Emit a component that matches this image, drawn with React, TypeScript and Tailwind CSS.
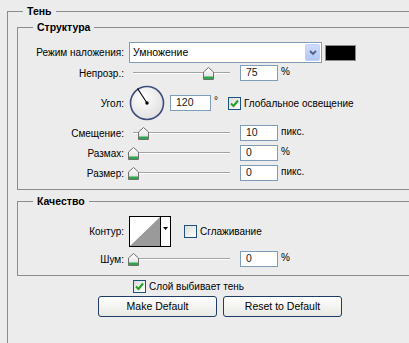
import { FC, ReactNode } from "react";

const font = "font-['Liberation_Sans','DejaVu_Sans',sans-serif]";

const Thumb: FC<{ pos: string }> = ({ pos }) => (
    <svg
        width="11"
        height="13"
        viewBox="0 0 11 13"
        className={`absolute top-[2px] ${pos}`}
    >
        <defs>
            <linearGradient id="thumbFill" x1="0" y1="0" x2="0" y2="1">
                <stop offset="0" stopColor="#ffffff" />
                <stop offset="1" stopColor="#dcdcdc" />
            </linearGradient>
        </defs>
        <path
            d="M5.5 0.5 L10.5 5 L10.5 12.5 L0.5 12.5 L0.5 5 Z"
            fill="url(#thumbFill)"
            stroke="#707070"
        />
        <rect x="1" y="9.5" width="9" height="2.5" fill="#2fa64a" />
    </svg>
);

const Slider: FC<{ pos: string }> = ({ pos }) => (
    <div className="relative ml-[4px] h-[16px] w-[107px] shrink-0">
        <div className="mx-[5px] mt-[7px] h-[2px] border-t border-[#a3a3a3] bg-white" />
        <Thumb pos={pos} />
    </div>
);

const Field: FC<{ value: string; w?: string; ml?: string }> = ({
    value,
    w = "w-[38px]",
    ml = "ml-[5px]",
}) => (
    <div
        className={`${w} ${ml} flex h-[16px] shrink-0 items-center border border-[#7f9db9] bg-white pl-[5px] text-[10.5px] text-[#1a1a1a]`}
    >
        {value}
    </div>
);

const Label: FC<{ children: ReactNode }> = ({ children }) => (
    <div className="w-[106px] shrink-0 text-right text-[10px] leading-[13px]">
        {children}
    </div>
);

const Checkbox: FC<{ checked?: boolean; ml?: string }> = ({
    checked,
    ml = "",
}) => (
    <div
        className={`${ml} flex h-[13px] w-[13px] shrink-0 items-center justify-center border border-[#1c5180] bg-gradient-to-br from-[#dcdcd7] to-white`}
    >
        {checked && (
            <svg width="9" height="9" viewBox="0 0 9 9">
                <path
                    d="M1 4.5 L3.5 7 L8 1.5"
                    fill="none"
                    stroke="#21a121"
                    strokeWidth="2"
                />
            </svg>
        )}
    </div>
);

const SliderRow: FC<{
    label: string;
    pos: string;
    value: string;
    unit: string;
    mt: string;
}> = ({ label, pos, value, unit, mt }) => (
    <div className={`flex h-[16px] items-center ${mt}`}>
        <Label>{label}</Label>
        <Slider pos={pos} />
        <Field value={value} />
        <span className="ml-[3px] self-start text-[10px] leading-[13px]">
            {unit}
        </span>
    </div>
);

const Dial = () => (
    <svg width="36" height="36" viewBox="0 0 36 36" className="ml-[5px] shrink-0">
        <defs>
            <radialGradient id="dialFill" cx="0.4" cy="0.35" r="0.7">
                <stop offset="0" stopColor="#ffffff" />
                <stop offset="1" stopColor="#dedede" />
            </radialGradient>
        </defs>
        <circle cx="18" cy="18" r="16.5" fill="url(#dialFill)" stroke="#3e4c7c" strokeWidth="1.6" />
        <line x1="18" y1="18" x2="8.5" y2="3.5" stroke="#000" strokeWidth="1.1" />
        <circle cx="18" cy="18" r="1.7" fill="#000" />
    </svg>
);

const Contour = () => (
    <div className="ml-[5px] flex h-[31px] w-[42px] shrink-0 border border-black bg-white">
        <svg width="30" height="29" viewBox="0 0 30 29">
            <polygon points="0,29 30,0 30,29" fill="#9a9a9a" />
        </svg>
        <div className="flex w-[10px] items-center justify-center border-l border-black">
            <svg width="5" height="3" viewBox="0 0 5 3" className="-mt-[6px]">
                <polygon points="0,0 5,0 2.5,3" fill="#000" />
            </svg>
        </div>
    </div>
);

const Button: FC<{ children: ReactNode }> = ({ children }) => (
    <div className="flex h-[21px] w-[119px] items-center justify-center rounded-[3px] border border-[#1d3c68] bg-gradient-to-b from-white to-[#e8e8e4] text-[10.5px] text-black">
        {children}
    </div>
);

const App = () => {
    return (
        <div
            className={`${font} h-[343px] w-[409px] overflow-hidden bg-[#ececec] pt-[5px] text-black`}
        >
            <fieldset className="ml-[7px] h-[345px] border-l border-t border-[#8c8c8c]">
                <legend className="ml-[15px] px-[4px] text-[10.5px] font-bold leading-[13px]">
                    Тень
                </legend>

                <fieldset className="ml-[9px] mt-[3px] border-b border-l border-t border-[#8c8c8c] pb-[8px] pt-[8px]">
                    <legend className="ml-[15px] px-[4px] text-[10.5px] font-bold leading-[13px]">
                        Структура
                    </legend>

                    <div className="flex h-[21px] items-center">
                        <Label>Режим наложения:</Label>
                        <div className="ml-[5px] flex h-[21px] w-[193px] items-center border border-[#7f9db9] bg-white pl-[3px] text-[10.5px]">
                            <span className="flex-1">Умножение</span>
                            <div className="mr-[1px] flex h-[17px] w-[15px] items-center justify-center rounded-[2px] border border-[#c0d0f8] bg-gradient-to-b from-[#cfdcfc] to-[#b3c7f5]">
                                <svg width="8" height="6" viewBox="0 0 8 6">
                                    <path
                                        d="M1 1 L4 4 L7 1"
                                        fill="none"
                                        stroke="#4d6185"
                                        strokeWidth="1.8"
                                    />
                                </svg>
                            </div>
                        </div>
                        <div className="ml-[3px] h-[16px] w-[31px] border border-[#8a8a8a] bg-black" />
                    </div>

                    <SliderRow label="Непрозр.:" pos="left-[75px]" value="75" unit="%" mt="mt-[2px]" />

                    <div className="mt-[4px] flex h-[36px] items-center">
                        <Label>Угол:</Label>
                        <Dial />
                        <Field value="120" w="w-[41px]" />
                        <span className="ml-[3px] -mt-[6px] text-[10px] leading-[13px]">°</span>
                        <Checkbox checked ml="ml-[10px]" />
                        <span className="ml-[3px] text-[10px] leading-[13px]">
                            Глобальное освещение
                        </span>
                    </div>

                    <SliderRow label="Смещение:" pos="left-[10px]" value="10" unit="пикс." mt="mt-[4px]" />
                    <SliderRow label="Размах:" pos="left-0" value="0" unit="%" mt="mt-[4px]" />
                    <SliderRow label="Размер:" pos="left-0" value="0" unit="пикс." mt="mt-[4px]" />
                </fieldset>

                <fieldset className="ml-[9px] mt-[5px] border-b border-l border-t border-[#8c8c8c] pb-[8px] pt-[8px]">
                    <legend className="ml-[15px] px-[4px] text-[10.5px] font-bold leading-[13px]">
                        Качество
                    </legend>

                    <div className="flex h-[31px] items-center">
                        <Label>Контур:</Label>
                        <Contour />
                        <Checkbox ml="ml-[13px]" />
                        <span className="ml-[3px] text-[10px] leading-[13px]">Сглаживание</span>
                    </div>

                    <SliderRow label="Шум:" pos="left-0" value="0" unit="%" mt="mt-[4px]" />
                </fieldset>

                <div className="mt-[4px] flex h-[13px] items-center pl-[125px]">
                    <Checkbox checked />
                    <span className="ml-[3px] text-[10px] leading-[13px]">Слой выбивает тень</span>
                </div>

                <div className="mt-[3px] flex gap-[6px] pl-[90px]">
                    <Button>Make Default</Button>
                    <Button>Reset to Default</Button>
                </div>
            </fieldset>
        </div>
    );
};

export default App;
